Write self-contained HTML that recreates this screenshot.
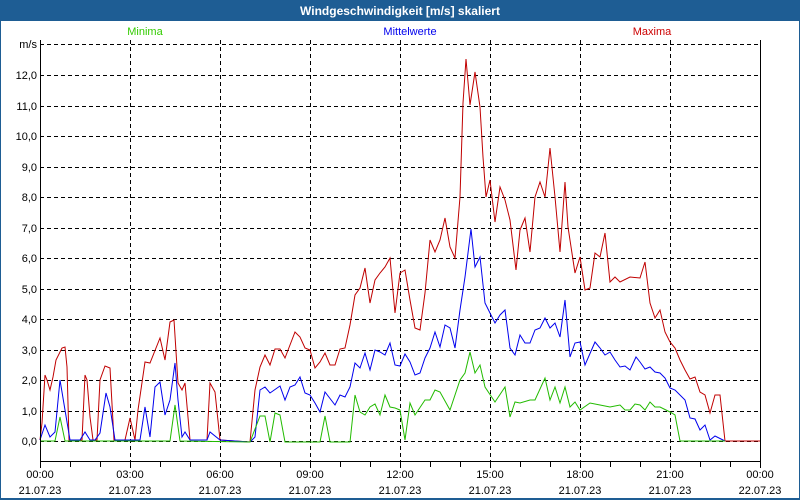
<!DOCTYPE html>
<html><head><meta charset="utf-8"><style>
html,body{margin:0;padding:0;background:#fff;}
body{width:800px;height:500px;overflow:hidden;position:relative;font-family:"Liberation Sans","DejaVu Sans",sans-serif;}
</style></head><body>
<svg width="800" height="500" xmlns="http://www.w3.org/2000/svg" style="position:absolute;left:0;top:0" font-family="Liberation Sans, DejaVu Sans, sans-serif">
<rect x="0" y="0" width="800" height="500" fill="#fff"/>
<rect x="0" y="0" width="800" height="21" fill="#1e5d94"/>
<rect x="0" y="0" width="1" height="500" fill="#1e5d94"/>
<rect x="799" y="0" width="1" height="500" fill="#1e5d94"/>
<rect x="0" y="498" width="800" height="2" fill="#1e5d94"/>
<text x="400" y="15" fill="#fff" font-size="12" font-weight="bold" text-anchor="middle">Windgeschwindigkeit [m/s] skaliert</text>
<text x="145" y="35" fill="#33cc00" font-size="11" text-anchor="middle">Minima</text>
<text x="410" y="35" fill="#0000ee" font-size="11" text-anchor="middle">Mittelwerte</text>
<text x="652" y="35" fill="#cc0000" font-size="11" text-anchor="middle">Maxima</text>
<g stroke="#000" stroke-width="1" stroke-dasharray="4,3" fill="none">
<path d="M40 44.5H760M40 75.5H760M40 106.5H760M40 136.5H760M40 167.5H760M40 197.5H760M40 228.5H760M40 258.5H760M40 289.5H760M40 319.5H760M40 350.5H760M40 380.5H760M40 411.5H760M40 441.5H760"/>
<path d="M130.5 40V461M220.5 40V461M310.5 40V461M400.5 40V461M490.5 40V461M580.5 40V461M670.5 40V461"/>
</g>
<g font-size="11" fill="#000" text-anchor="end">
<text x="37" y="48">m/s</text>
<text x="37" y="79">12,0</text><text x="37" y="110">11,0</text><text x="37" y="140">10,0</text>
<text x="37" y="171">9,0</text><text x="37" y="201">8,0</text><text x="37" y="232">7,0</text>
<text x="37" y="262">6,0</text><text x="37" y="293">5,0</text><text x="37" y="323">4,0</text>
<text x="37" y="354">3,0</text><text x="37" y="384">2,0</text><text x="37" y="415">1,0</text>
<text x="37" y="445">0,0</text>
</g>
<g fill="none" stroke-width="1" stroke-linejoin="miter">
<polyline stroke="#c00000" points="40,440 42,423 45,375 47,380 50,390 53,377 56,360 62,348 65,347 67,367 69,440 82,440 85,375 87,380 90,417 93,440 97,440 100,380 105,366 110,368 114,440 125,440 130,418 135,440 138,410 145,362 150,363 160,338 165,360 170,322 174,320 178,383 182,390 185,383 190,440 207,440 210,383 215,392 220,440 250,442 255,390 260,367 265,355 270,365 275,349 280,349 285,358 295,332 300,337 305,348 310,350 315,368 320,362 325,353 330,365 335,365 340,349 345,348 350,325 355,295 360,288 365,268 370,303 375,280 380,273 385,267 390,258 395,313 400,273 405,270 410,300 415,328 420,330 425,293 430,240 435,252 440,240 445,218 450,247 455,258 460,197 463,103 466,59 470,105 475,72 480,107 483,157 486,197 490,180 495,222 500,187 505,200 510,220 516,270 520,230 525,218 530,252 535,197 540,182 545,197 550,148 555,197 560,252 565,182 568,227 575,273 580,257 585,290 590,288 595,253 600,257 605,233 610,282 615,277 620,282 630,277 640,278 645,262 650,303 655,318 660,310 665,332 670,342 675,348 680,360 685,370 690,379 695,377 700,392 705,395 710,413 715,395 720,395 725,441 760,441"/>
<polyline stroke="#0000ee" points="40,440 45,425 50,437 55,432 60,380 65,410 70,440 80,440 85,432 90,440 95,440 100,433 106,393 110,407 115,440 140,440 145,407 150,437 155,387 160,382 165,415 170,400 175,363 178,400 182,437 185,432 190,440 207,440 210,432 220,440 250,442 255,437 260,390 265,387 270,393 280,386 285,400 290,387 295,385 300,377 305,393 310,395 315,403 320,412 325,392 335,405 340,395 345,397 350,387 355,363 360,368 365,353 370,370 375,350 380,352 385,355 390,343 395,365 400,366 405,354 410,362 415,375 420,373 425,358 430,348 435,332 440,347 445,325 450,328 455,348 460,310 465,277 471,229 475,267 480,257 485,303 490,313 495,323 500,315 505,310 510,348 515,355 520,335 525,343 530,343 535,330 540,328 545,318 550,328 555,323 560,337 565,300 570,357 575,343 580,342 585,365 595,342 600,348 605,355 610,352 615,360 620,367 625,366 630,370 636,357 640,362 645,369 650,367 655,372 660,373 665,378 670,388 675,390 685,400 690,418 695,419 700,430 705,425 710,440 715,436 725,441"/>
<polyline stroke="#22bb00" points="40,441 55,441 60,417 65,441 170,441 175,405 180,441 250,442 260,416 265,416 270,442 275,413 280,415 285,442 320,442 325,416 330,442 350,442 355,395 360,412 365,415 370,407 375,404 380,415 385,395 390,407 395,408 400,410 405,440 410,403 415,415 425,400 430,400 435,390 440,392 450,410 460,380 465,373 470,352 475,373 480,365 485,387 495,402 505,387 510,417 515,402 520,403 530,400 535,400 545,378 550,400 555,387 560,403 565,387 570,407 575,402 580,410 590,403 600,405 610,407 620,405 625,410 630,410 635,404 640,405 645,410 650,402 655,407 660,407 670,412 675,415 680,441 725,441"/>
</g>
<g stroke="#000" stroke-width="1" fill="none">
<path d="M40.5 40V462M760.5 40V462M40 461.5H761"/>
<path d="M40.5 461V468M70.5 461V467M100.5 461V467M130.5 461V468M160.5 461V467M190.5 461V467M220.5 461V468M250.5 461V467M280.5 461V467M310.5 461V468M340.5 461V467M370.5 461V467M400.5 461V468M430.5 461V467M460.5 461V467M490.5 461V468M520.5 461V467M550.5 461V467M580.5 461V468M610.5 461V467M640.5 461V467M670.5 461V468M700.5 461V467M730.5 461V467M760.5 461V468"/>
</g>
<g font-size="11" fill="#000" text-anchor="middle">
<text x="40" y="478">00:00</text><text x="40" y="494">21.07.23</text>
<text x="130" y="478">03:00</text><text x="130" y="494">21.07.23</text>
<text x="220" y="478">06:00</text><text x="220" y="494">21.07.23</text>
<text x="310" y="478">09:00</text><text x="310" y="494">21.07.23</text>
<text x="400" y="478">12:00</text><text x="400" y="494">21.07.23</text>
<text x="490" y="478">15:00</text><text x="490" y="494">21.07.23</text>
<text x="580" y="478">18:00</text><text x="580" y="494">21.07.23</text>
<text x="670" y="478">21:00</text><text x="670" y="494">21.07.23</text>
<text x="760" y="478">00:00</text><text x="760" y="494">22.07.23</text>
</g>
</svg>
</body></html>
